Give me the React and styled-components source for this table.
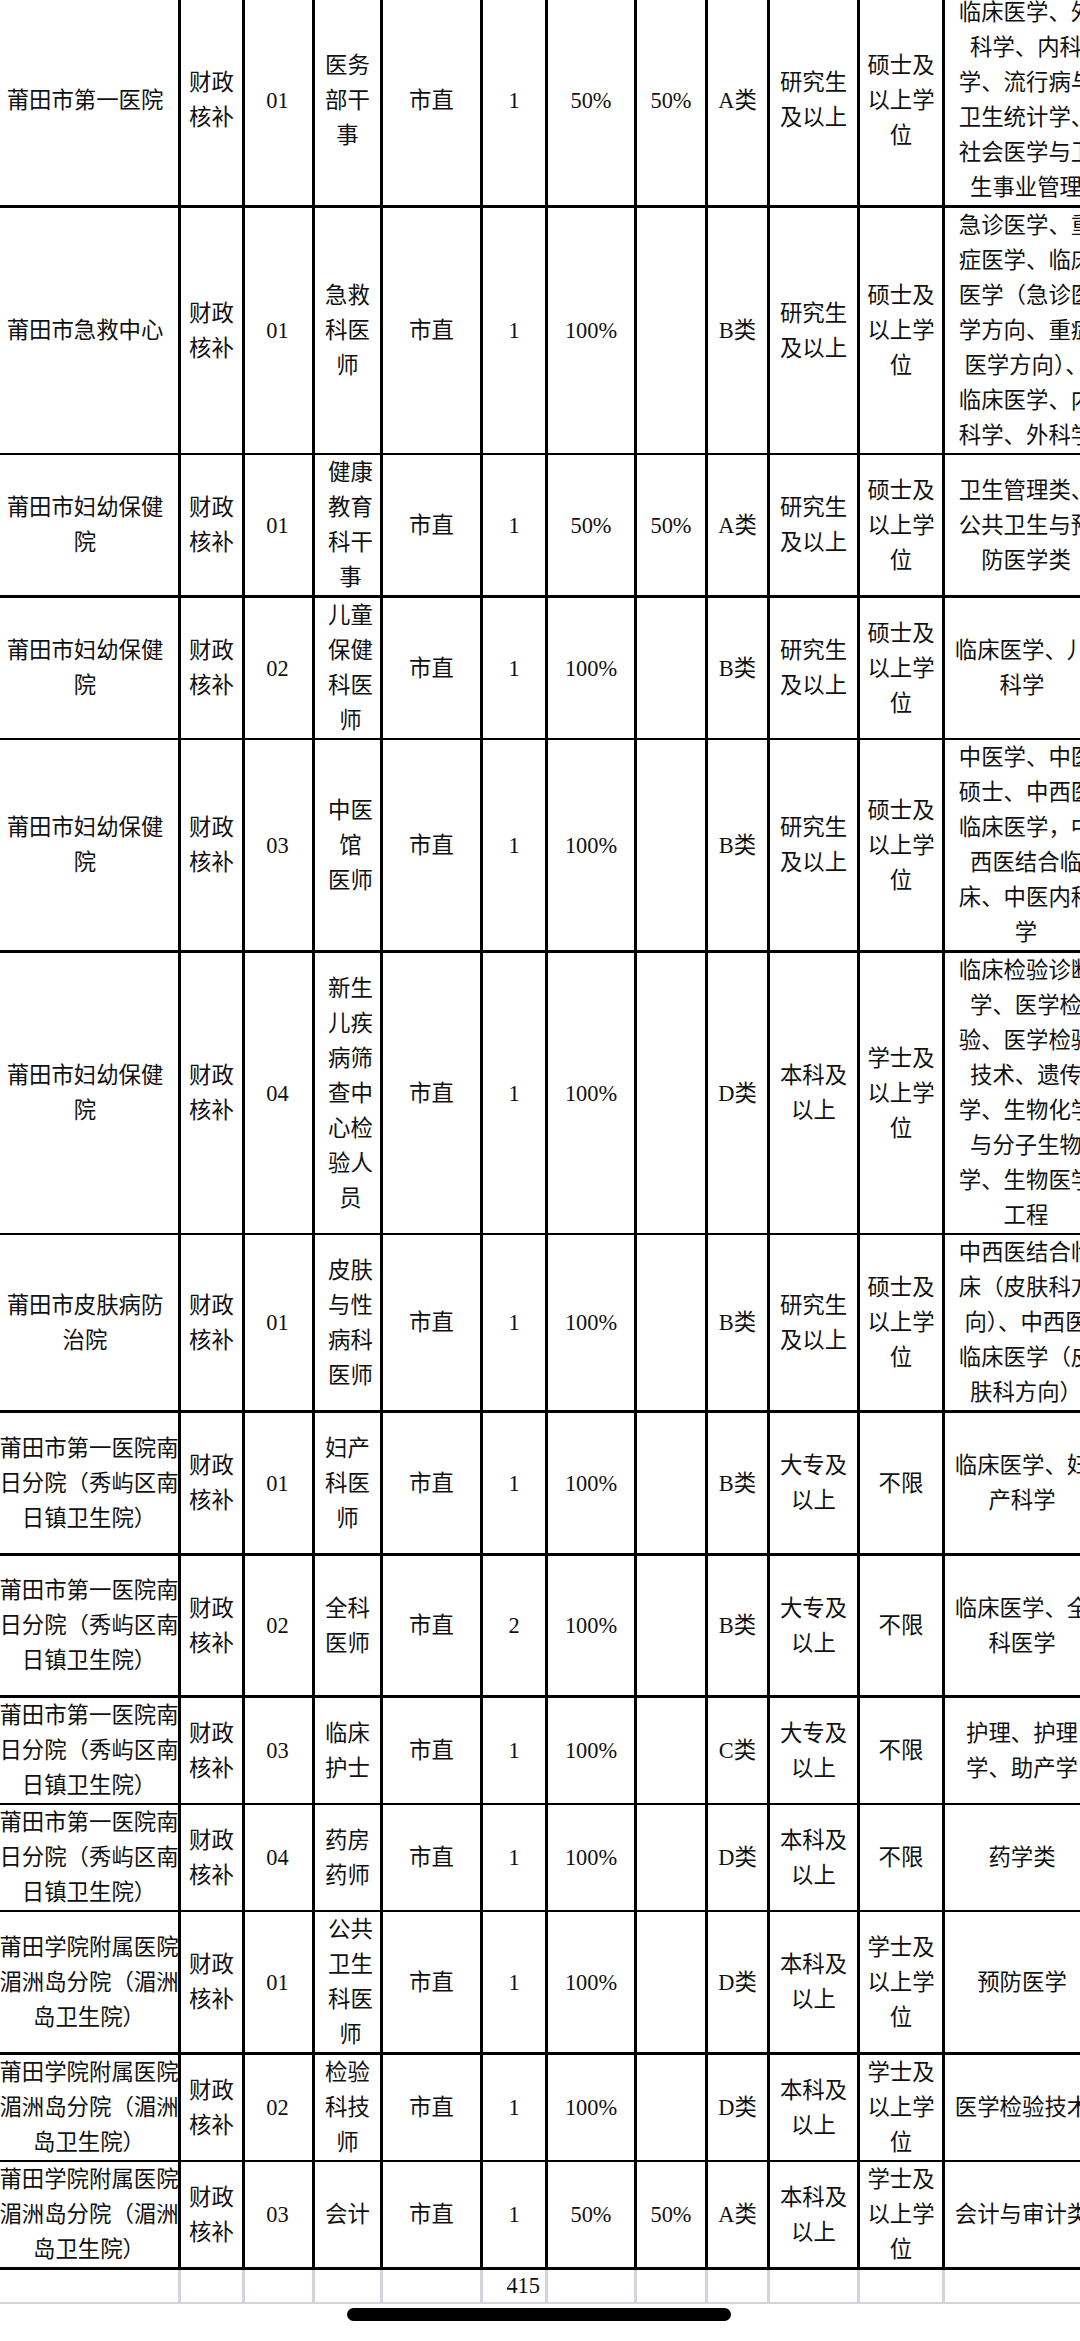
import React from "react";
import styled, { createGlobalStyle } from "styled-components";

const GlobalStyle = createGlobalStyle`
  html, body {
    margin: 0;
    padding: 0;
    background: #fff;
    overflow: hidden;
  }
  body {
    height: 2341px;
    font-family: "Liberation Serif", "Noto Sans CJK SC", serif;
  }
`;

// column widths between the 3px rules of the sheet
const COLS = "183px 61px 67px 65px 97px 62px 86px 68px 59px 87px 82px 154px";

const Page = styled.div`
  width: 1080px;
  height: 2341px;
  overflow: hidden;
  display: flex;
  flex-direction: column;
`;

const Sheet = styled.div`
  display: flex;
  flex-direction: column;
  gap: 3px;
  width: max-content;
  background: #000;
  border: 3px solid #000;
  margin: -8px 0 0 -8px;
`;

const Row = styled.div`
  display: grid;
  grid-template-columns: ${COLS};
  column-gap: 3px;
  height: ${(p) => p.$h}px;
`;

const Cell = styled.div`
  background: #fff;
  display: flex;
  align-items: center;
  justify-content: center;
  text-align: center;
  white-space: pre;
  font-family: "Liberation Serif", "Noto Sans CJK SC", sans-serif;
  font-size: 22.4px;
  line-height: 35px;
  color: #111;
  padding-left: ${(p) => p.$padL || 0}px;
  padding-right: ${(p) => p.$padR || 0}px;
`;

const TotalRow = styled.div`
  display: grid;
  grid-template-columns: ${COLS};
  column-gap: 3px;
  width: max-content;
  height: 32px;
  padding: 0 3px 2px;
  margin-left: -8px;
  background: #d3d3dc;
`;

const TotalCell = styled.div`
  background: #fff;
  display: flex;
  align-items: center;
  justify-content: flex-end;
  padding-right: 5px;
  font-family: "Liberation Serif", serif;
  font-size: 22.4px;
  color: #111;
`;

const HomeBar = styled.div`
  margin: 4px 0 0 347px;
  width: 384px;
  height: 13px;
  border-radius: 7px;
  background: #000;
`;

const FY = "莆田市第一医院南\n日分院（秀屿区南\n日镇卫生院）";
const MZ = "莆田学院附属医院\n湄洲岛分院（湄洲\n岛卫生院）";
const FB = "莆田市妇幼保健\n院";
const YJS = "研究生\n及以上";
const BK = "本科及\n以上";
const DZ = "大专及\n以上";
const SS = "硕士及\n以上学\n位";
const XS = "学士及\n以上学\n位";

const rows = [
  { h: 210, g: 1, unit: "莆田市第一医院", code: "01", job: "医务\n部干\n事", n: "1", a: "50%", b: "50%", cls: "A类", edu: YJS, deg: SS,
    major: "临床医学、外\n科学、内科\n学、流行病与\n卫生统计学、\n社会医学与卫\n生事业管理" },
  { h: 244, g: 1, unit: "莆田市急救中心", code: "01", job: "急救\n科医\n师", n: "1", a: "100%", b: "", cls: "B类", edu: YJS, deg: SS,
    major: "急诊医学、重\n症医学、临床\n医学（急诊医\n学方向、重症\n医学方向）、\n临床医学、内\n科学、外科学" },
  { h: 140, g: 1, unit: FB, code: "01", job: "健康\n教育\n科干\n事", js: true, n: "1", a: "50%", b: "50%", cls: "A类", edu: YJS, deg: SS,
    major: "卫生管理类、\n公共卫生与预\n防医学类" },
  { h: 139, g: 1, unit: FB, code: "02", job: "儿童\n保健\n科医\n师", js: true, n: "1", a: "100%", b: "", cls: "B类", edu: YJS, deg: SS,
    major: "临床医学、儿\n科学", mg: 2 },
  { h: 210, g: 1, unit: FB, code: "03", job: "中医\n馆\n医师", js: true, n: "1", a: "100%", b: "", cls: "B类", edu: YJS, deg: SS,
    major: "中医学、中医\n硕士、中西医\n临床医学，中\n西医结合临\n床、中医内科\n学" },
  { h: 279, g: 1, unit: FB, code: "04", job: "新生\n儿疾\n病筛\n查中\n心检\n验人\n员", js: true, n: "1", a: "100%", b: "", cls: "D类", edu: BK, deg: XS,
    major: "临床检验诊断\n学、医学检\n验、医学检验\n技术、遗传\n学、生物化学\n与分子生物\n学、生物医学\n工程" },
  { h: 175, g: 1, unit: "莆田市皮肤病防\n治院", code: "01", job: "皮肤\n与性\n病科\n医师", js: true, n: "1", a: "100%", b: "", cls: "B类", edu: YJS, deg: SS,
    major: "中西医结合临\n床（皮肤科方\n向）、中西医\n临床医学（皮\n肤科方向）" },
  { h: 140, g: 2, unit: FY, code: "01", job: "妇产\n科医\n师", n: "1", a: "100%", b: "", cls: "B类", edu: DZ, deg: "不限",
    major: "临床医学、妇\n产科学" },
  { h: 139, g: 2, unit: FY, code: "02", job: "全科\n医师", n: "2", a: "100%", b: "", cls: "B类", edu: DZ, deg: "不限",
    major: "临床医学、全\n科医学" },
  { h: 104, g: 2, unit: FY, code: "03", job: "临床\n护士", n: "1", a: "100%", b: "", cls: "C类", edu: DZ, deg: "不限",
    major: "护理、护理\n学、助产学" },
  { h: 104, g: 2, unit: FY, code: "04", job: "药房\n药师", n: "1", a: "100%", b: "", cls: "D类", edu: BK, deg: "不限",
    major: "药学类" },
  { h: 140, g: 2, unit: MZ, code: "01", job: "公共\n卫生\n科医\n师", js: true, n: "1", a: "100%", b: "", cls: "D类", edu: BK, deg: XS,
    major: "预防医学" },
  { h: 104, g: 2, unit: MZ, code: "02", job: "检验\n科技\n师", n: "1", a: "100%", b: "", cls: "D类", edu: BK, deg: XS,
    major: "医学检验技术" },
  { h: 105, g: 2, unit: MZ, code: "03", job: "会计", n: "1", a: "50%", b: "50%", cls: "A类", edu: BK, deg: XS,
    major: "会计与审计类" },
];

function PostRow({ r }) {
  const first = r.g === 1;
  return (
    <Row $h={r.h}>
      <Cell $padL={first ? 0 : 5} $padR={first ? 3 : 0}>{r.unit}</Cell>
      <Cell>{"财政\n核补"}</Cell>
      <Cell $padR={2}>{r.code}</Cell>
      <Cell $padL={r.js ? 6 : 0}>{r.job}</Cell>
      <Cell>市直</Cell>
      <Cell>{r.n}</Cell>
      <Cell>{r.a}</Cell>
      <Cell>{r.b}</Cell>
      <Cell>{r.cls}</Cell>
      <Cell>{r.edu}</Cell>
      <Cell>{r.deg}</Cell>
      <Cell $padL={first && !r.mg ? 8 : 0}>{r.major}</Cell>
    </Row>
  );
}

export default function App() {
  return (
    <>
      <GlobalStyle />
      <Page>
        <Sheet>
          {rows.map((r, i) => (
            <PostRow key={i} r={r} />
          ))}
        </Sheet>
        <TotalRow>
          {Array.from({ length: 12 }).map((_, i) => (
            <TotalCell key={i}>{i === 5 ? "415" : ""}</TotalCell>
          ))}
        </TotalRow>
        <HomeBar />
      </Page>
    </>
  );
}
